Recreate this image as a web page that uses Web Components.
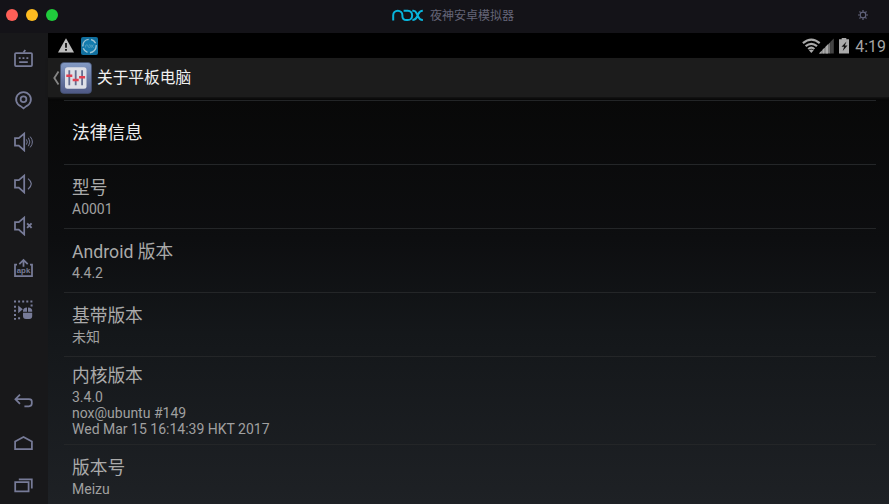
<!DOCTYPE html>
<html lang="zh-CN">
<head>
<meta charset="utf-8">
<title>夜神安卓模拟器</title>
<style>
html,body{margin:0;height:100%;overflow:hidden;background:#000}
</style>
</head>
<body>
<nox-window></nox-window>
<script>
const base = '*{box-sizing:border-box}svg{display:block}';
function define(name, css, html) {
  const t = document.createElement('template');
  t.innerHTML = '<style>' + base + css + '</style>' + html;
  customElements.define(name, class extends HTMLElement {
    constructor() {
      super();
      this.attachShadow({mode: 'open'}).append(t.content.cloneNode(true));
    }
  });
}

const speaker = '<path d="M2 7.2h3.8l5.4-4.6v16.8l-5.4-4.8H2z"/>';
const icons = {
  keyboard: '<rect x="2" y="6" width="17" height="13" rx="1"/><path d="M10.5 5.5 12.3 3M6.2 15h8.6M5.7 11h1.9M9.5 11h1.9M13.4 11h1.9"/>',
  location: '<path d="M8 17.4a7.4 7.4 0 1 1 5 0l-2.5 2z"/><circle cx="10.5" cy="10.3" r="2.9"/>',
  volumeUp: speaker + '<g stroke-width="1"><path d="M13.4 8.4q1.8 2.6 0 5.2M15.4 6.8q3 4.2 0 8.4M17.2 5.6q4.4 5.4 0 10.8"/></g>',
  volumeDown: speaker + '<path stroke-width="1.2" d="M15 5.6q6.6 5.1 0 10.6"/>',
  mute: speaker + '<path stroke-width="1.9" d="m14.1 8.3 4.5 4.5m0-4.5-4.5 4.5"/>',
  apk: '<path d="M4 7.5H2v11.7h17V7.5h-2M10.5 9.8V3M6.3 7.2 10.5 3l4.2 4.2"/><text x="10.5" y="16.3" text-anchor="middle" textLength="13.5" lengthAdjust="spacingAndGlyphs" font-size="7.4" font-weight="700" font-family="Liberation Sans, sans-serif" fill="currentColor" stroke="none">apk</text>',
  macro: '<path stroke-width="2" stroke-dasharray="2 2.1" d="M1 2.5h18.5M2 6.7v14M5.1 19.3h4"/><g fill="currentColor" stroke="none"><path d="m5.2 6.4 4.6 3.9-4.6 3.9zM10 13.8h9.2v3.2a3 3 0 0 1-3 3H13a3 3 0 0 1-3-3zM10 12.8v-1q0-2.8 4-3.2v4.2zM15 12.8V8.5q4.2.4 4.2 3.3v1zM17.6 5.4h2v2h-2z"/></g>',
  back: '<path d="M7 4.6 2.4 9.2 7 13.8M2.4 9.2H16q2.8 0 2.8 2.4v2q0 2.7-2.8 2.7h-4.6"/>',
  home: '<path d="M2.1 17V9.6l8.4-4.5 8.4 4.5V17z"/>',
  recents: '<path d="M2.2 8h13.4v9.3H2.2zM5.8 5.3h13v9.2"/>'
};

customElements.define('side-button', class extends HTMLElement {
  connectedCallback() {
    const root = this.attachShadow({mode: 'open'});
    root.innerHTML = `<style>${base}:host{display:flex;height:42px;width:47px;align-items:center;justify-content:center;color:#777b98}</style>
      <svg width="21" height="21" viewBox="0 0 21 21" fill="none" stroke="currentColor" stroke-width="1.75">${icons[this.getAttribute('icon')]}</svg>`;
  }
});

define('nox-logo', ':host{display:block}',
  `<svg width="32" height="14" viewBox="0 0 32 14" fill="none" stroke="#08b5dc" stroke-width="2">
    <path d="M1.2 12.5V7.3a4.6 4.6 0 0 1 9.2 0v.9q0 3.8 4 3.8h1.4c5.8 0 5.8-9.2 0-9.2h-4.2M20.3 2.8h1q2 0 3 2l1.6 3q1.6 4.2 5 4.2M30.8 2.8q-3 0-4.4 3l-1 2.2q-1.8 4-5 4"/>
  </svg>`);

define('title-bar', `
  :host{display:grid;grid-template-columns:1fr auto 1fr;align-items:center;height:33px;background:#141318;padding:0 20px 3px 6px}
  .lights{display:flex;gap:8px}
  i{width:12px;height:12px;border-radius:50%;background:#ff5f57}
  i+i{background:#febc20}i+i+i{background:#20cb3c}
  .brand{display:flex;align-items:center;gap:6px;font:12px/18px "Noto Sans CJK SC",sans-serif;color:#646577;padding-left:24px;margin-right:-7px}
  .gear{justify-self:end}`,
  `<div class="lights"><i></i><i></i><i></i></div>
   <div class="brand"><nox-logo></nox-logo><span>夜神安卓模拟器</span></div>
   <svg class="gear" width="12" height="12" viewBox="0 0 12 12" fill="none" stroke="#62647d" stroke-width="1.2"><circle cx="6" cy="6" r="2.8"/><path d="M6 1v1.7M6 9.3V11M1 6h1.7M9.3 6H11M2.5 2.5l1.1 1.1M8.4 8.4l1.1 1.1M9.5 2.5 8.4 3.6M3.6 8.4 2.5 9.5"/></svg>`);

define('side-bar', `
  :host{display:flex;flex-direction:column;justify-content:space-between;width:48px;background:#18181a;padding:3px 0 0}
  nav:last-child{margin-bottom:-1px}`,
  `<nav><side-button icon="keyboard"></side-button><side-button icon="location"></side-button><side-button icon="volumeUp"></side-button><side-button icon="volumeDown"></side-button><side-button icon="mute"></side-button><side-button icon="apk"></side-button><side-button icon="macro"></side-button></nav>
   <nav><side-button icon="back"></side-button><side-button icon="home"></side-button><side-button icon="recents"></side-button></nav>`);

define('status-bar', `
  :host{display:flex;justify-content:space-between;align-items:center;height:25px;background:#000;padding:0 3px 0 10px;color:#aaa}
  div{display:flex;align-items:center}
  .left{gap:7px}
  .clock{font:15.9px/25px Roboto,sans-serif;margin-left:5px;color:#a5a5a5;padding-top:1px}`,
  `<div class="left">
    <svg width="16" height="17" viewBox="0 0 16 17"><path fill="#bcbcbc" d="M8 1.3 16 15.5H0z"/><path stroke="#111" stroke-width="1.8" d="M8 6v4.8M8 12v1.8"/></svg>
    <svg width="17" height="18" viewBox="0 0 17 18"><rect width="17" height="18" rx="2" fill="#106f9e"/><circle cx="8.5" cy="9" r="6.7" fill="#137cae" stroke="#9dc4d5" stroke-width="1.4" stroke-dasharray="10 2.5 6 2"/><g fill="none" stroke="#5ba2c1" stroke-width=".8"><path d="M4.6 10.5V9q0-1.2 1.2-1.2T7 9q0 1.5 1.2 1.5t1.3-1.3T8 7.8M9.8 7.8q1 0 1.4 1.4t1.4 1.3M12.6 7.8q-1 0-1.4 1.4t-1.4 1.3"/></g></svg>
  </div>
  <div>
    <svg width="49" height="18" viewBox="-1 0 49 18">
      <g fill="none" stroke="#aaa" stroke-width="2.2"><path d="M.9 6.2q8.4-7 16.8 0M3.6 9.2q5.7-4.8 11.4 0M6.2 12q3.1-2.6 6.2 0"/></g><path fill="#aaa" d="m9.3 16-2.4-2.7q2.4-1.8 4.8 0z"/>
      <path fill="#777" d="M17 16.5 28.5 5v11.5z"/><path fill="#aaa" d="M17 16.5h2.6v-2.7zM20.5 16.5h2v-5.7l-2 2zM23.5 16.5h2.5V7.3l-2.5 2.5z"/><path fill="#444" d="M28.5 4.8 31.8 1.5v15h-3.3z"/>
      <path fill="#aaa" d="M39.7 1h4.6v1.2H47v14.3H37V2.2h2.7z"/><path fill="#111" d="m44.5 4.5-5 5.3h2.6l-1.4 4.3 4.8-5.6h-2.7z"/>
    </svg><span class="clock">4:19</span>
  </div>`);

define('settings-icon', ':host{display:block}',
  `<svg width="32" height="32" viewBox="0 0 32 32"><defs><linearGradient id="g" x2="0" y2="1"><stop stop-color="#849bc5"/><stop offset="1" stop-color="#4e5884"/></linearGradient></defs>
   <rect x=".5" y=".5" width="31" height="31" rx="3.5" fill="url(#g)" stroke="#435070" stroke-width=".7"/><rect x="5" y="5.3" width="21.5" height="21.5" rx="2.5" fill="#dedfe7"/>
   <path stroke="#646d8f" stroke-width="1.8" d="M9.3 8.3v15M15.7 8.3v15M22.1 8.3v15"/><path stroke="#e13e50" stroke-width="2.6" d="M6.3 13.8h6M12.7 18h6M19.1 15.3h6"/></svg>`);

define('action-bar', `
  :host{display:flex;align-items:center;height:39px;background:#1c1c1c;padding-left:4px;color:#f0f0f0;font:15.7px/24px Roboto,"Noto Sans CJK SC",sans-serif;box-shadow:0 1px 2px #161616;position:relative}
  settings-icon{margin:0 5px 0 0}`,
  `<svg width="8" height="16" viewBox="0 0 8 16" fill="none" stroke="#858585" stroke-width="1.8"><path d="M6.5 1.5 2.3 8l4.2 6.5"/></svg><settings-icon></settings-icon><slot></slot>`);

define('info-row', `
  :host{display:flex;flex-direction:column;justify-content:center;height:var(--row,64px);flex:none;border-top:1px solid #242628;padding:var(--top,0) 8px 0;color:#aaa;font-family:Roboto,"Noto Sans CJK SC",sans-serif}
  .title{font-size:17.7px;line-height:24px}
  ::slotted([slot=sub]){display:block;font-size:14px;line-height:16px;color:#a0a0a0;padding-top:1px}`,
  `<div class="title"><slot></slot></div><slot name="sub"></slot>`);

define('info-list', `
  :host{display:flex;flex-direction:column;flex:1;min-height:0;overflow:hidden;padding:3px 13px 0 16px;background:linear-gradient(#080808,#0d0e10 35%,#14171a 58%,#1e2125)}`,
  `<slot></slot>`);

define('nox-window', `
  :host{display:flex;flex-direction:column;height:504px;width:889px;overflow:hidden}
  .body{display:flex;flex:1;min-height:0}
  main{display:flex;flex-direction:column;flex:1;min-width:0}
  .legal{color:#ededed;--top:1px}
  .kernel{--row:88px}`,
  `<title-bar></title-bar>
   <div class="body"><side-bar></side-bar>
    <main><status-bar></status-bar><action-bar>关于平板电脑</action-bar>
     <info-list>
      <info-row class="legal">法律信息</info-row>
      <info-row>型号<span slot="sub">A0001</span></info-row>
      <info-row>Android 版本<span slot="sub">4.4.2</span></info-row>
      <info-row>基带版本<span slot="sub">未知</span></info-row>
      <info-row class="kernel">内核版本<span slot="sub">3.4.0<br>nox@ubuntu #149<br>Wed Mar 15 16:14:39 HKT 2017</span></info-row>
      <info-row>版本号<span slot="sub">Meizu</span></info-row>
     </info-list>
    </main></div>`);
</script>
</body>
</html>
